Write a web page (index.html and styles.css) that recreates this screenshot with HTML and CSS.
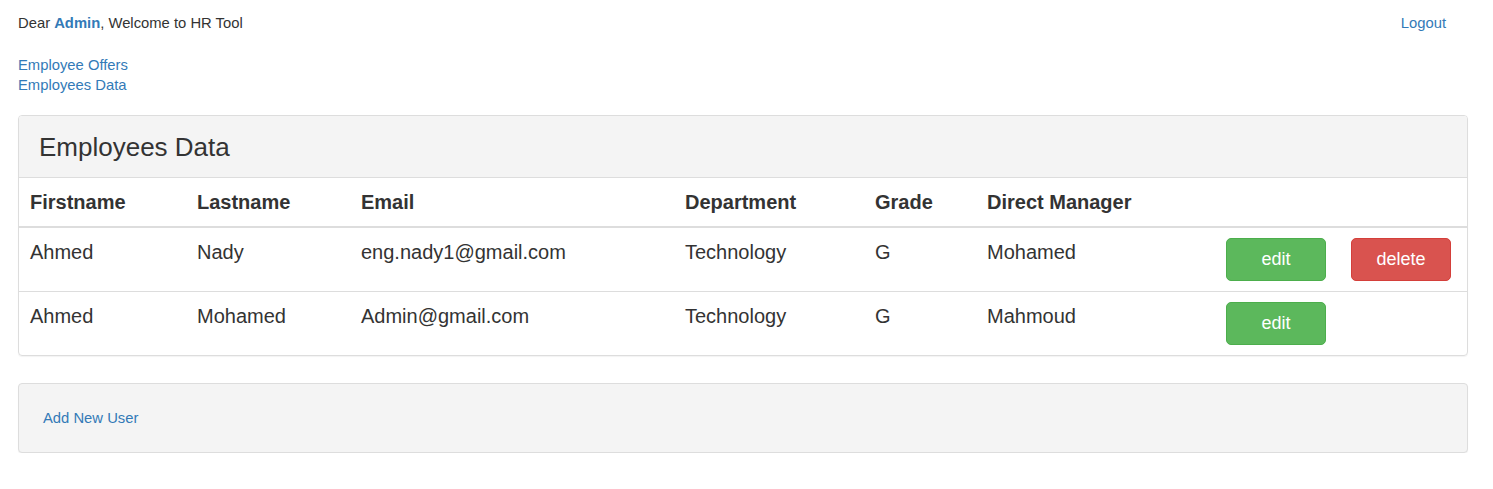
FILE: index.html
```html
<!DOCTYPE html>
<html>
<head>
<meta charset="utf-8">
<title>HR Tool</title>
<link rel="stylesheet" href="styles.css">
</head>
<body>
<div class="page">
  <div class="topbar">
    <div class="welcome">Dear <a class="user" href="#">Admin</a>, Welcome to HR Tool</div>
    <a class="logout" href="#">Logout</a>
  </div>
  <nav class="menu">
    <a href="#">Employee Offers</a>
    <a href="#">Employees Data</a>
  </nav>
  <section class="panel">
    <div class="panel-heading">Employees Data</div>
    <table class="grid">
      <colgroup>
        <col class="c1"><col class="c2"><col class="c3"><col class="c4"><col class="c5"><col class="c6"><col class="c7"><col class="c8">
      </colgroup>
      <thead>
        <tr><th>Firstname</th><th>Lastname</th><th>Email</th><th>Department</th><th>Grade</th><th>Direct Manager</th><th></th><th></th></tr>
      </thead>
      <tbody>
        <tr>
          <td>Ahmed</td><td>Nady</td><td>eng.nady1@gmail.com</td><td>Technology</td><td>G</td><td>Mohamed</td>
          <td><button class="btn btn-edit">edit</button></td>
          <td><button class="btn btn-delete">delete</button></td>
        </tr>
        <tr>
          <td>Ahmed</td><td>Mohamed</td><td>Admin@gmail.com</td><td>Technology</td><td>G</td><td>Mahmoud</td>
          <td><button class="btn btn-edit">edit</button></td>
          <td></td>
        </tr>
      </tbody>
    </table>
  </section>
  <section class="panel panel-footer">
    <a href="#">Add New User</a>
  </section>
</div>
</body>
</html>
```

FILE: styles.css
```css
html, body {
  margin: 0;
  padding: 0;
  background: #fff;
}
body {
  font-family: "Liberation Sans", Arial, sans-serif;
  font-size: 14.8px;
  line-height: 20px;
  color: #333;
}
a {
  color: #337ab7;
  text-decoration: none;
}
.page {
  width: 1450px;
  margin-left: 18px;
  padding-top: 13px;
}
.topbar {
  display: flex;
  justify-content: space-between;
  padding-right: 22px;
}
.user {
  font-weight: bold;
}
.menu {
  display: flex;
  flex-direction: column;
  align-items: flex-start;
  margin-top: 22px;
}
.panel {
  border: 1px solid #ddd;
  border-radius: 4px;
  box-shadow: 0 1px 1px rgba(0,0,0,0.05);
  margin-top: 20px;
  overflow: hidden;
}
.panel-heading {
  background: #f4f4f4;
  border-bottom: 1px solid #ddd;
  padding: 18px 20px 16px;
  font-size: 26px;
  line-height: 27px;
}
.grid {
  width: 100%;
  table-layout: fixed;
  border-collapse: collapse;
  font-size: 20px;
  line-height: 28px;
}
.c1 { width: 167px; }
.c2 { width: 164px; }
.c3 { width: 324px; }
.c4 { width: 190px; }
.c5 { width: 112px; }
.c6 { width: 240px; }
.c7 { width: 125px; }
.c8 { width: 126px; }
.grid th, .grid td {
  padding: 10px 10px 10px 11px;
  text-align: left;
  vertical-align: top;
  white-space: nowrap;
}
.grid th {
  font-weight: bold;
  border-bottom: 2px solid #ddd;
}
.grid tbody tr + tr td {
  border-top: 1px solid #ddd;
}
.grid td:nth-child(7), .grid td:nth-child(8) {
  padding-left: 10px;
}
.btn {
  display: block;
  box-sizing: border-box;
  width: 100px;
  height: 43px;
  padding: 0 0 2px;
  border-radius: 5px;
  font-family: "Liberation Sans", Arial, sans-serif;
  font-size: 18px;
  line-height: 24px;
  color: #fff;
  cursor: pointer;
}
.btn-edit {
  background: #5cb85c;
  border: 1px solid #4cae4c;
}
.btn-delete {
  background: #d9534f;
  border: 1px solid #d43f3a;
}
.panel-footer {
  margin-top: 27px;
  background: #f4f4f4;
  padding: 24px 24px;
}
```
